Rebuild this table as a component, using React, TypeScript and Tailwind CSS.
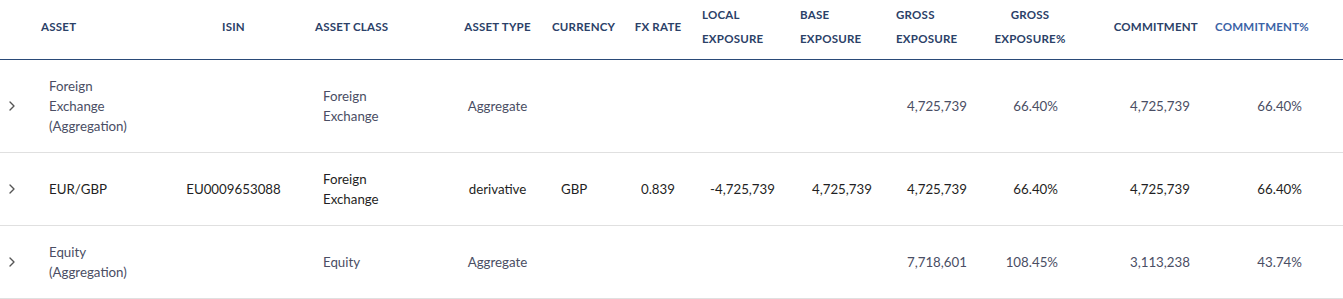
import { ChevronRight } from "lucide-react";
import clsx from "clsx";

type Col = {
  key: string;
  label: string[];
  head: string;
  body: string;
};

const cols: Col[] = [
  { key: "asset", label: ["ASSET"], head: "pl-2", body: "pl-4" },
  { key: "isin", label: ["ISIN"], head: "justify-center", body: "justify-center" },
  { key: "cls", label: ["ASSET CLASS"], head: "pl-2", body: "pl-4" },
  { key: "type", label: ["ASSET TYPE"], head: "justify-center", body: "justify-center" },
  { key: "ccy", label: ["CURRENCY"], head: "pl-3", body: "pl-[21px]" },
  { key: "fx", label: ["FX RATE"], head: "justify-center", body: "justify-center" },
  { key: "local", label: ["LOCAL", "EXPOSURE"], head: "pl-3", body: "justify-end pr-[15px]" },
  { key: "base", label: ["BASE", "EXPOSURE"], head: "pl-[10px]", body: "justify-end pr-[13px]" },
  { key: "gross", label: ["GROSS", "EXPOSURE"], head: "pl-[11px]", body: "justify-end pr-[13px]" },
  { key: "grossPct", label: ["GROSS", "EXPOSURE%"], head: "justify-center text-center", body: "justify-end pr-[22px]" },
  { key: "commit", label: ["COMMITMENT"], head: "justify-end pr-[7px]", body: "justify-end pr-[15px]" },
  { key: "commitPct", label: ["COMMITMENT%"], head: "pl-[10px] text-[#3b63a6]", body: "justify-end pr-[41px]" },
];

type Row = { agg: boolean; cells: Record<string, string> };

const rows: Row[] = [
  {
    agg: true,
    cells: {
      asset: "Foreign Exchange (Aggregation)",
      cls: "Foreign Exchange",
      type: "Aggregate",
      gross: "4,725,739",
      grossPct: "66.40%",
      commit: "4,725,739",
      commitPct: "66.40%",
    },
  },
  {
    agg: false,
    cells: {
      asset: "EUR/GBP",
      isin: "EU0009653088",
      cls: "Foreign Exchange",
      type: "derivative",
      ccy: "GBP",
      fx: "0.839",
      local: "-4,725,739",
      base: "4,725,739",
      gross: "4,725,739",
      grossPct: "66.40%",
      commit: "4,725,739",
      commitPct: "66.40%",
    },
  },
  {
    agg: true,
    cells: {
      asset: "Equity (Aggregation)",
      cls: "Equity",
      type: "Aggregate",
      gross: "7,718,601",
      grossPct: "108.45%",
      commit: "3,113,238",
      commitPct: "43.74%",
    },
  },
];

const grid =
  "grid grid-cols-[33px_127px_147px_148px_85px_86px_64px_100px_95px_95px_100px_125px_1fr]";

export default function App() {
  return (
    <div className="w-[1343px] bg-white font-['Lato',_'Noto_Sans',_sans-serif]">
      <div className={clsx(grid, "border-b border-[#2a4a78]")}>
        <div className="h-[59px]" />
        {cols.map((c) => (
          <div
            key={c.key}
            className={clsx(
              "flex h-[59px] items-center pb-[5px] text-[11.5px] font-bold leading-6 tracking-[0.02em] text-[#2b4168]",
              c.head
            )}
          >
            <span>
              {c.label.map((l) => (
                <span key={l} className="block">
                  {l}
                </span>
              ))}
            </span>
          </div>
        ))}
      </div>
      {rows.map((r, i) => (
        <div
          key={i}
          className={clsx(
            grid,
            "border-b border-[#e0e0e0] text-[13.3px] leading-5",
            r.agg ? "text-[#4a4e64]" : "text-[#1f1f24]"
          )}
        >
          <div className="flex items-center pl-[4px] text-[#555]">
            <ChevronRight size={16} strokeWidth={2} />
          </div>
          {cols.map((c) => (
            <div key={c.key} className={clsx("flex items-center py-4", c.body)}>
              {(c.key === "asset" || c.key === "cls") ? (
                <span className="w-[92px]">{r.cells[c.key] ?? ""}</span>
              ) : (
                <span>{r.cells[c.key] ?? ""}</span>
              )}
            </div>
          ))}
        </div>
      ))}
    </div>
  );
}
